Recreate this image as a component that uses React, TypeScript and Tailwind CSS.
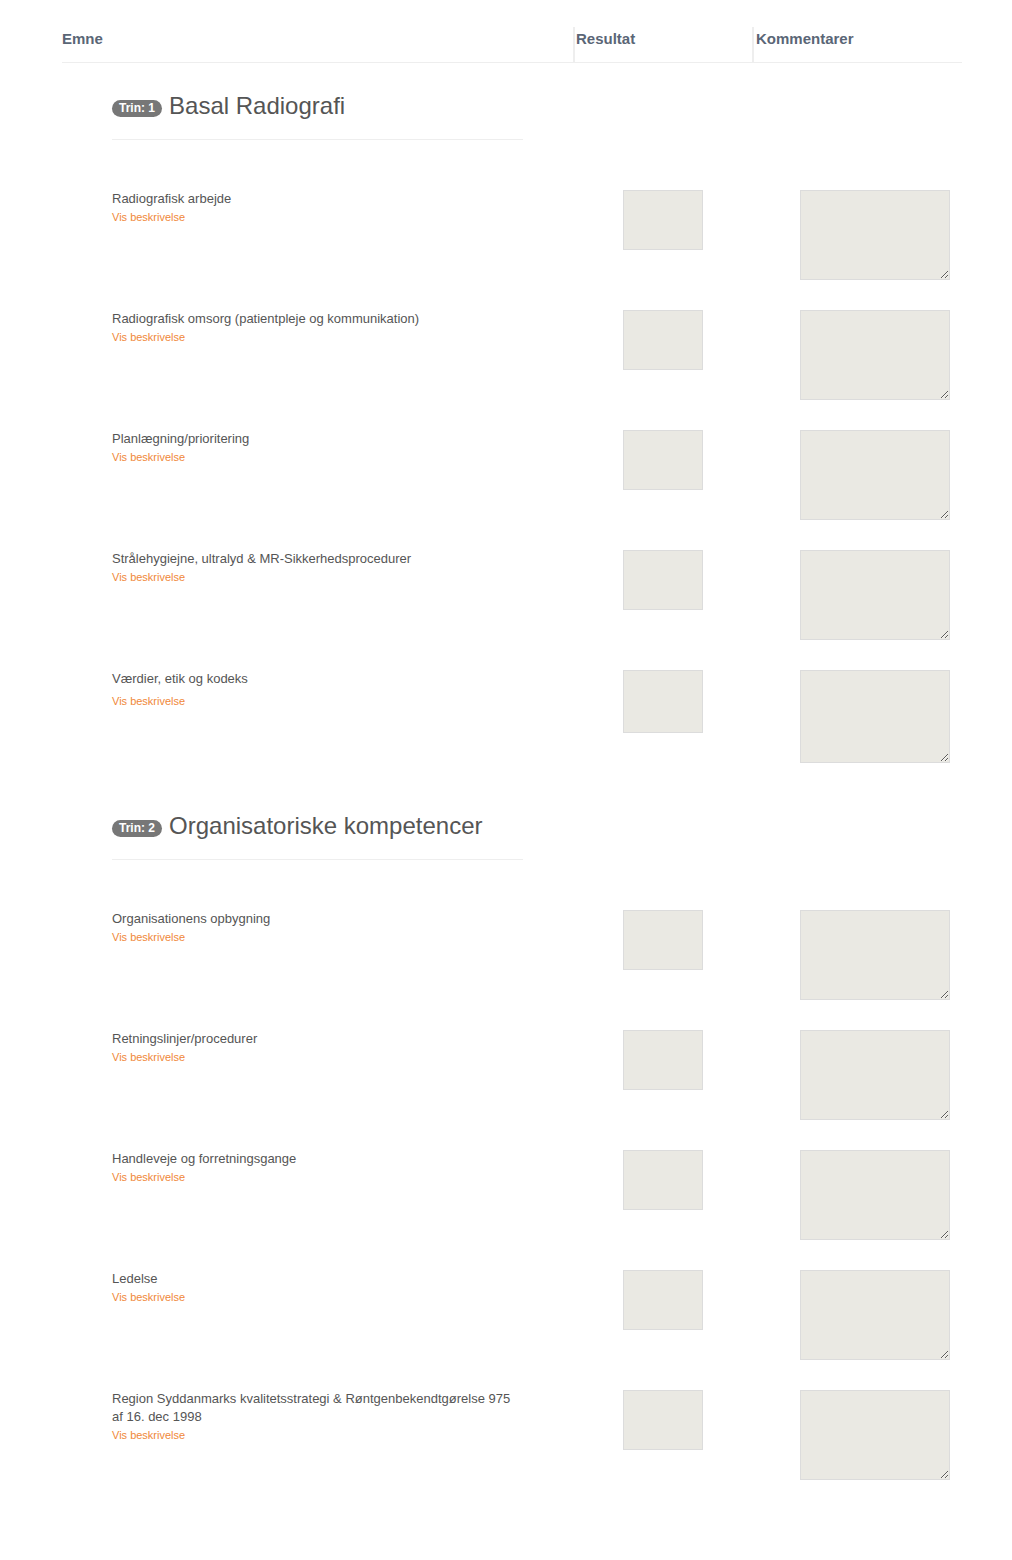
import React from 'react';

type Item = { title: string; tall?: boolean };

const sections: { step: number; title: string; items: Item[] }[] = [
  {
    step: 1,
    title: 'Basal Radiografi',
    items: [
      { title: 'Radiografisk arbejde' },
      { title: 'Radiografisk omsorg (patientpleje og kommunikation)' },
      { title: 'Planlægning/prioritering' },
      { title: 'Strålehygiejne, ultralyd & MR-Sikkerhedsprocedurer' },
      { title: 'Værdier, etik og kodeks', tall: true },
    ],
  },
  {
    step: 2,
    title: 'Organisatoriske kompetencer',
    items: [
      { title: 'Organisationens opbygning' },
      { title: 'Retningslinjer/procedurer' },
      { title: 'Handleveje og forretningsgange' },
      { title: 'Ledelse' },
      { title: 'Region Syddanmarks kvalitetsstrategi & Røntgenbekendtgørelse 975 af 16. dec 1998' },
    ],
  },
];

const Row = ({ item }: { item: Item }) => (
  <div className={`flex ${item.tall ? 'h-[123px]' : 'h-[120px]'}`}>
    <div className="w-[511px] pl-[50px] pr-[50px] pt-[10px]">
      <div className="text-[13px] leading-[18px] text-[#555]">{item.title}</div>
      <a
        href="#"
        className={`block text-[11px] leading-[14px] text-[#f0883a] ${item.tall ? 'mt-[6px]' : 'mt-[2px]'}`}
      >
        Vis beskrivelse
      </a>
    </div>
    <div className="w-[179px] pl-[50px] pt-[10px]">
      <input
        type="text"
        className={`block w-[80px] ${item.tall ? 'h-[63px]' : 'h-[60px]'} bg-[#eae9e3] border border-[#dcdcdc] outline-none`}
      />
    </div>
    <div className="w-[210px] pl-[48px] pt-[10px]">
      <textarea
        className={`block w-[150px] ${item.tall ? 'h-[93px]' : 'h-[90px]'} bg-[#eae9e3] border border-[#dcdcdc] outline-none`}
      />
    </div>
  </div>
);

export default function App() {
  return (
    <div className="min-h-[1560px] bg-white pl-[62px] pt-[27px] font-['Liberation_Sans',Arial,sans-serif]">
      <div className="w-[900px]">
        <div className="flex h-[36px] border-b border-[#eee] text-[15px] font-bold text-[#5a6676]">
          <div className="w-[511px] pt-[1px]">Emne</div>
          <div className="w-[179px] border-l-2 border-[#eee] pl-[1px] pt-[1px]">Resultat</div>
          <div className="w-[210px] border-l-2 border-[#eee] pl-[2px] pt-[1px]">Kommentarer</div>
        </div>

        {sections.map((s) => (
          <div key={s.step}>
            <div className="pl-[50px] pt-[27px] pb-[40px]">
              <div className="flex w-[411px] items-center gap-[7px] border-b border-[#eee] pb-[17px]">
                <span className="mt-[4px] rounded-full bg-[#777] px-[7px] text-[12px] font-bold leading-[17px] text-white">
                  Trin: {s.step}
                </span>
                <h2 className="text-[24px] leading-[32px] text-[#555]">{s.title}</h2>
              </div>
            </div>
            {s.items.map((it) => (
              <Row key={it.title} item={it} />
            ))}
          </div>
        ))}
      </div>
    </div>
  );
}
